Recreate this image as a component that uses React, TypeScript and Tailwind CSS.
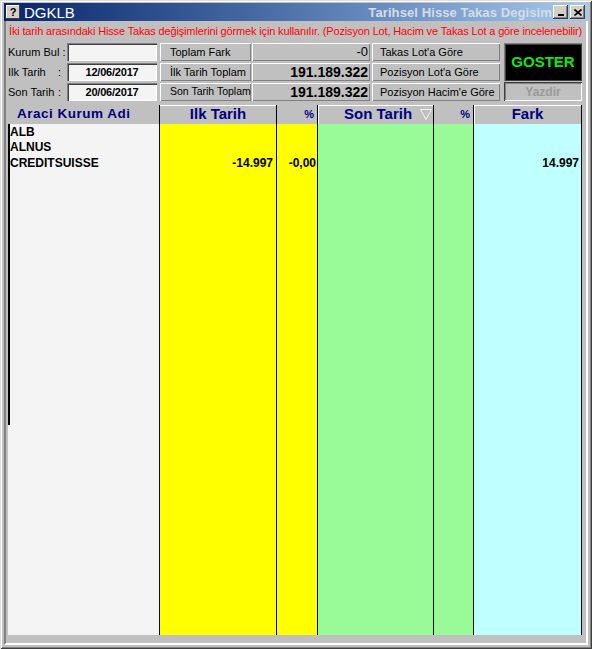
import React from "react";

const raised = "shadow-[inset_1px_1px_0_#ffffff,inset_-1px_-1px_0_#808080]";
const sunken = "shadow-[inset_1px_1px_0_#808080,inset_2px_2px_0_#404040,inset_-1px_-1px_0_#ffffff]";

type Row = { name: string; ilk: string; p1: string; son: string; p2: string; fark: string };
const rows: Row[] = [
  { name: "ALB", ilk: "", p1: "", son: "", p2: "", fark: "" },
  { name: "ALNUS", ilk: "", p1: "", son: "", p2: "", fark: "" },
  { name: "CREDITSUISSE", ilk: "-14.997", p1: "-0,00", son: "", p2: "", fark: "14.997" },
];

function Btn({ children, w }: { children: React.ReactNode; w: string }) {
  return (
    <div className={`${w} h-[18px] bg-[#c0c0c0] ${raised} flex items-center pl-[10px] text-[11px] text-black whitespace-nowrap overflow-hidden`}>
      {children}
    </div>
  );
}

function Val({ children, bold }: { children: React.ReactNode; bold?: boolean }) {
  return (
    <div className={`w-[118px] h-[18px] bg-[#c0c0c0] ${raised} flex items-center justify-end pr-[2px] text-black whitespace-nowrap ${bold ? "text-[14px] font-bold" : "text-[13px]"}`}>
      {children}
    </div>
  );
}

function Input({ children }: { children?: React.ReactNode }) {
  return (
    <div className={`w-[90px] h-[18px] bg-[#f4f4f4] ${sunken} flex items-center justify-center text-[11px] font-bold text-black tracking-[-0.2px]`}>
      {children}
    </div>
  );
}

export default function App() {
  return (
    <div className="w-[592px] h-[649px] bg-[#c0c0c0] pt-[3px] px-[4px] pb-[4px] flex flex-col font-['Liberation_Sans',Arial,sans-serif] shadow-[inset_1px_1px_0_#dfdfdf,inset_-1px_-1px_0_#404040,inset_2px_2px_0_#ffffff,inset_-2px_-2px_0_#808080] overflow-hidden">
      {/* Title bar */}
      <div className="h-[18px] shrink-0 flex items-center bg-linear-to-r from-[#0a246a] to-[#a6caf0] pl-[2px] pr-[3px]">
        <div className="w-[14px] h-[14px] bg-[#d4d0c8] flex items-center justify-center text-[11px] leading-none font-bold text-black shadow-[inset_-1px_-1px_0_#404040,inset_1px_1px_0_#ffffff]">
          ?
        </div>
        <span className="ml-[4px] text-white text-[15px] leading-none">DGKLB</span>
        <div className="flex-1" />
        <div className="mr-[1px] whitespace-nowrap text-[#d8dce4] font-bold text-[13px] leading-none tracking-[0.1px]">
          Tarihsel Hisse Takas Degisim
        </div>
        <div className="w-[15px] h-[14px] bg-[#d4d0c8] flex items-end justify-center pb-[3px] shadow-[inset_-1px_-1px_0_#404040,inset_1px_1px_0_#ffffff,inset_-2px_-2px_0_#808080]">
          <div className="w-[6px] h-[2px] bg-black" />
        </div>
        <div className="ml-[2px] w-[15px] h-[14px] bg-[#d4d0c8] flex items-center justify-center shadow-[inset_-1px_-1px_0_#404040,inset_1px_1px_0_#ffffff,inset_-2px_-2px_0_#808080]">
          <svg width="8" height="7" viewBox="0 0 8 7">
            <path d="M0.5 0.5 L7.5 6.5 M7.5 0.5 L0.5 6.5" stroke="black" strokeWidth="1.6" />
          </svg>
        </div>
      </div>

      {/* Content panel */}
      <div className="flex-1 flex flex-col border-l-2 border-l-[#808080] border-r-2 border-r-[#ffffff] border-b-2 border-b-[#ffffff] pt-[1px] pb-[8px]">
        <div className="h-[19px] shrink-0 flex items-center pl-[3px] text-[11px] text-[#ff0000] whitespace-nowrap tracking-[-0.15px]">
          İki tarih arasındaki Hisse Takas değişimlerini görmek için kullanılır. (Pozisyon Lot, Hacim ve Takas Lot a göre incelenebilir)
        </div>

        {/* Controls */}
        <div className="mt-[2px] ml-[2px] flex shrink-0">
          <div className="flex flex-col gap-[2px]">
            <div className="flex items-center h-[18px]">
              <span className="w-[59px] text-[11px] text-black">Kurum Bul :</span>
              <Input />
            </div>
            <div className="flex items-center h-[18px]">
              <span className="w-[50px] text-[11px] text-black">Ilk Tarih</span>
              <span className="w-[9px] text-[11px] text-black">:</span>
              <Input>12/06/2017</Input>
            </div>
            <div className="flex items-center h-[18px]">
              <span className="w-[50px] text-[11px] text-black">Son Tarih</span>
              <span className="w-[9px] text-[11px] text-black">:</span>
              <Input>20/06/2017</Input>
            </div>
          </div>
          <div className="ml-[3px] flex flex-col gap-[2px]">
            <Btn w="w-[91px]">Toplam Fark</Btn>
            <Btn w="w-[91px]">İlk Tarih Toplam</Btn>
            <Btn w="w-[91px]">
              <span className="text-[10.5px]">Son Tarih Toplam</span>
            </Btn>
          </div>
          <div className="ml-[1px] flex flex-col gap-[2px]">
            <Val>-0</Val>
            <Val bold>191.189.322</Val>
            <Val bold>191.189.322</Val>
          </div>
          <div className="ml-[2px] flex flex-col gap-[2px]">
            <Btn w="w-[128px]">
              <span className="-ml-[2px]">Takas Lot'a Göre</span>
            </Btn>
            <Btn w="w-[128px]">
              <span className="-ml-[2px]">Pozisyon Lot'a Göre</span>
            </Btn>
            <Btn w="w-[128px]">
              <span className="-ml-[2px]">Pozisyon Hacim'e Göre</span>
            </Btn>
          </div>
          <div className="ml-[4px] flex flex-col gap-[1px]">
            <div className="w-[78px] h-[38px] bg-black flex items-center justify-center text-[15px] font-bold text-[#10e810] shadow-[inset_1px_1px_0_#808080,inset_-1px_-1px_0_#404040,inset_2px_2px_0_#404040]">
              GOSTER
            </div>
            <div className="w-[78px] h-[19px] bg-[#c0c0c0] flex items-center justify-center text-[12px] font-bold text-[#9a9a9a] shadow-[inset_1px_1px_0_#404040,inset_-1px_-1px_0_#ffffff,inset_2px_2px_0_#808080]">
              Yazdir
            </div>
          </div>
        </div>

        {/* Grid */}
        <div className="mt-[4px] ml-[2px] flex flex-1">
          {/* col0 */}
          <div className="w-[152px] flex flex-col border-r border-r-black">
            <div className="h-[19px] flex items-center pl-[9px] text-[13.5px] font-bold text-[#000080] tracking-[0.5px]">
              Araci Kurum Adi
            </div>
            <div className="flex-1 flex bg-[#f4f4f4]">
              <div className="w-[2px] h-[301px] bg-black" />
              <div className="flex-1 flex flex-col">
                {rows.map((r) => (
                  <div key={r.name} className="h-[15.5px] flex items-center text-[12px] font-bold text-black leading-none">
                    {r.name}
                  </div>
                ))}
              </div>
            </div>
          </div>
          {/* col1 */}
          <div className="w-[117px] flex flex-col border-r border-r-black">
            <div className="h-[19px] bg-[#c0c0c0] shadow-[inset_0_1px_0_#ffffff] flex items-center justify-center text-[15px] font-bold text-[#000080]">
              Ilk Tarih
            </div>
            <div className="flex-1 flex flex-col bg-[#ffff00] pr-[3px]">
              {rows.map((r) => (
                <div key={r.name} className="h-[15.5px] flex items-center justify-end text-[12px] font-bold text-black leading-none">
                  {r.ilk}
                </div>
              ))}
            </div>
          </div>
          {/* col2 */}
          <div className="w-[41px] flex flex-col border-r border-r-black">
            <div className="h-[19px] flex items-center justify-end pr-[3px] text-[11px] font-bold text-[#000080]">%</div>
            <div className="flex-1 flex flex-col bg-[#ffff00] pr-[1px]">
              {rows.map((r) => (
                <div key={r.name} className="h-[15.5px] flex items-center justify-end text-[12px] font-bold text-black leading-none">
                  {r.p1}
                </div>
              ))}
            </div>
          </div>
          {/* col3 */}
          <div className="w-[116px] flex flex-col border-r border-r-black">
            <div className="h-[19px] bg-[#c0c0c0] shadow-[inset_1px_1px_0_#ffffff] flex items-center pl-[26px] text-[15px] font-bold text-[#000080] whitespace-nowrap">
              Son Tarih
              <svg className="ml-[8px]" width="12" height="11" viewBox="0 0 12 11">
                <path d="M0.5 0.5 L11.5 0.5 L6 10.5 Z" fill="none" stroke="#f4f4f4" strokeWidth="1" />
              </svg>
            </div>
            <div className="flex-1 flex flex-col bg-[#98fb98]">
              {rows.map((r) => (
                <div key={r.name} className="h-[15.5px]">{r.son}</div>
              ))}
            </div>
          </div>
          {/* col4 */}
          <div className="w-[40px] flex flex-col border-r border-r-black">
            <div className="h-[19px] flex items-center justify-end pr-[3px] text-[11px] font-bold text-[#000080]">%</div>
            <div className="flex-1 bg-[#98fb98]" />
          </div>
          {/* col5 */}
          <div className="w-[108px] flex flex-col border-r border-r-black">
            <div className="h-[19px] bg-[#c0c0c0] shadow-[inset_1px_1px_0_#ffffff] flex items-center justify-center text-[15px] font-bold text-[#000080]">
              Fark
            </div>
            <div className="flex-1 flex flex-col bg-[#c0ffff] pr-[2px]">
              {rows.map((r) => (
                <div key={r.name} className="h-[15.5px] flex items-center justify-end text-[12px] font-bold text-black leading-none">
                  {r.fark}
                </div>
              ))}
            </div>
          </div>
        </div>
      </div>
    </div>
  );
}
